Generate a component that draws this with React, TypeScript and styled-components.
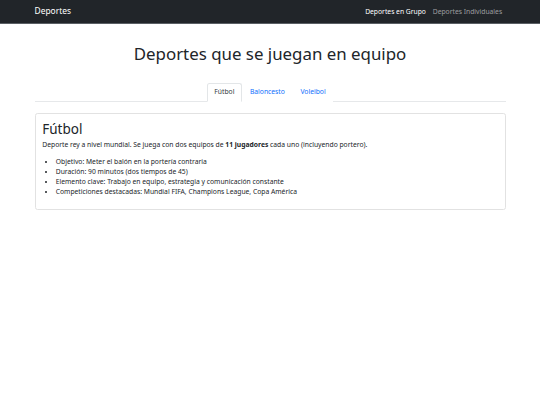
import React, { useState } from "react";
import styled, { createGlobalStyle } from "styled-components";

const GlobalStyle = createGlobalStyle`
  html { font-size: 6.75px; }
  *, *::before, *::after { box-sizing: border-box; }
  body {
    margin: 0;
    font-family: "Noto Sans", "Open Sans", sans-serif;
    font-size: 1rem;
    line-height: 1.5;
    color: #212529;
    background: #fff;
  }
`;

const Navbar = styled.nav`
  background: #212529;
  border-bottom: 1px solid #5a5f64;
  padding: 0.5rem 0 calc(0.5rem - 1px);
`;

const Container = styled.div`
  width: 100%;
  max-width: 481px;
  margin: 0 auto;
  padding: 0 5px;
`;

const NavInner = styled(Container)`
  display: flex;
  align-items: center;
  justify-content: space-between;
`;

const Brand = styled.a`
  color: #fff;
  font-size: 1.25rem;
  padding: 0.3125rem 0;
  text-decoration: none;
  line-height: 1.5;
`;

const NavLinks = styled.div`
  display: flex;
`;

const NavLink = styled.a<{ $active?: boolean }>`
  padding: 0.5rem;
  color: ${(p) => (p.$active ? "#fff" : "rgba(255,255,255,0.55)")};
  text-decoration: none;
  font-size: 1rem;
`;

const Title = styled.h1`
  text-align: center;
  font-size: 2.5rem;
  font-weight: 400;
  line-height: 1.2;
  margin: 20px 0 19px;
`;

const Tabs = styled.div`
  display: flex;
  justify-content: center;
  border-bottom: 1px solid #e6e8ea;
  margin-bottom: 11px;
`;

const Tab = styled.button<{ $active?: boolean }>`
  font-family: inherit;
  font-size: 1rem;
  line-height: 1.5;
  padding: 0.5rem 1rem;
  margin-bottom: -1px;
  background: #fff;
  cursor: pointer;
  outline: none;
  border: 1px solid transparent;
  border-color: ${(p) => (p.$active ? "#e3e6e8 #e3e6e8 #fff" : "transparent")};
  border-top-left-radius: 0.375rem;
  border-top-right-radius: 0.375rem;
  color: ${(p) => (p.$active ? "#343a40" : "#0d6efd")};
`;

const Card = styled.div`
  border: 1px solid #e2e2e2;
  border-radius: 0.375rem;
  padding: 1rem;
`;

const CardTitle = styled.h2`
  font-size: 2rem;
  font-weight: 400;
  line-height: 1.2;
  margin: 0 0 0.5rem;
`;

const Paragraph = styled.p`
  margin: 0 0 1rem;
`;

const List = styled.ul`
  margin: 0 0 0.75rem;
  padding-left: 2rem;
`;

const sports = {
  "Fútbol": {
    desc: (
      <>
        Deporte rey a nivel mundial. Se juega con dos equipos de <b>11 jugadores</b> cada uno (incluyendo portero).
      </>
    ),
    items: [
      "Objetivo: Meter el balón en la portería contraria",
      "Duración: 90 minutos (dos tiempos de 45)",
      "Elemento clave: Trabajo en equipo, estrategia y comunicación constante",
      "Competiciones destacadas: Mundial FIFA, Champions League, Copa América",
    ],
  },
  Baloncesto: {
    desc: (
      <>
        Se juega con dos equipos de <b>5 jugadores</b> en pista.
      </>
    ),
    items: ["Objetivo: Encestar el balón en la canasta rival", "Duración: 4 cuartos"],
  },
  Voleibol: {
    desc: (
      <>
        Se juega con dos equipos de <b>6 jugadores</b> separados por una red.
      </>
    ),
    items: ["Objetivo: Que el balón toque el suelo del campo rival", "Sets a 25 puntos"],
  },
} as const;

type SportKey = keyof typeof sports;

export default function App() {
  const [tab, setTab] = useState<SportKey>("Fútbol");
  const s = sports[tab];
  return (
    <>
      <GlobalStyle />
      <Navbar>
        <NavInner>
          <Brand href="#">Deportes</Brand>
          <NavLinks>
            <NavLink href="#" $active>
              Deportes en Grupo
            </NavLink>
            <NavLink href="#">Deportes Individuales</NavLink>
          </NavLinks>
        </NavInner>
      </Navbar>
      <Container>
        <Title>Deportes que se juegan en equipo</Title>
        <Tabs>
          {(Object.keys(sports) as SportKey[]).map((k) => (
            <Tab key={k} $active={k === tab} onClick={() => setTab(k)}>
              {k}
            </Tab>
          ))}
        </Tabs>
        <Card>
          <CardTitle>{tab}</CardTitle>
          <Paragraph>{s.desc}</Paragraph>
          <List>
            {s.items.map((i) => (
              <li key={i}>{i}</li>
            ))}
          </List>
        </Card>
      </Container>
    </>
  );
}
